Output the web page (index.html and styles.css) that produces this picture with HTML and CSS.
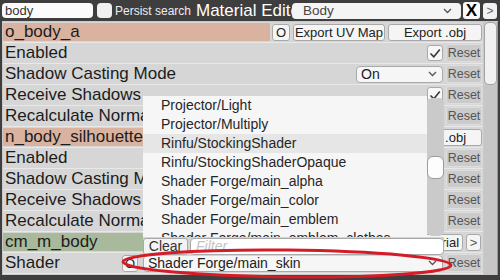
FILE: index.html
```html
<!DOCTYPE html>
<html>
<head>
<meta charset="utf-8">
<link rel="stylesheet" href="styles.css">
</head>
<body>
<div class="window">
  <div class="topbar">
    <div class="search">body</div>
    <div class="tcheck"></div>
    <span class="persist">Persist search</span>
    <span class="title">Material Editor</span>
    <div class="top-select"><span>Body</span><svg class="chev" width="9" height="6" viewBox="0 0 9 6"><path d="M1 1 L4.5 4.5 L8 1" fill="none" stroke="#555" stroke-width="1.3"/></svg></div>
    <div class="xbtn">X</div>
    <div class="navbtn">&gt;</div>
  </div>
  <div class="main">
    <div class="rows">
      <div class="row">
        <div class="label hdr-salmon">o_body_a</div>
        <div class="btn w-o">O</div>
        <div class="btn w-uv">Export UV Map</div>
        <div class="btn w-obj">Export .obj</div>
      </div>
      <div class="row">
        <div class="label">Enabled</div>
        <div class="cb"><svg width="14" height="14" viewBox="0 0 14 14"><path d="M2.5 7.5 L5.8 10.8 L11.8 3.5" fill="none" stroke="#333" stroke-width="1.5"/></svg></div>
        <div class="reset">Reset</div>
      </div>
      <div class="row">
        <div class="label">Shadow Casting Mode</div>
        <div class="dd w-on"><span>On</span><svg class="chev" width="9" height="6" viewBox="0 0 9 6"><path d="M1 1 L4.5 4.5 L8 1" fill="none" stroke="#555" stroke-width="1.3"/></svg></div>
        <div class="reset">Reset</div>
      </div>
      <div class="row">
        <div class="label">Receive Shadows</div>
        <div class="cb"><svg width="14" height="14" viewBox="0 0 14 14"><path d="M2.5 7.5 L5.8 10.8 L11.8 3.5" fill="none" stroke="#333" stroke-width="1.5"/></svg></div>
        <div class="reset">Reset</div>
      </div>
      <div class="row">
        <div class="label">Recalculate Normals</div>
        <div class="cb"></div>
        <div class="reset">Reset</div>
      </div>
      <div class="row">
        <div class="label hdr-salmon">n_body_silhouette</div>
        <div class="btn w-o">O</div>
        <div class="btn w-uv">Export UV Map</div>
        <div class="btn w-obj">Export .obj</div>
      </div>
      <div class="row">
        <div class="label">Enabled</div>
        <div class="cb"></div>
        <div class="reset">Reset</div>
      </div>
      <div class="row">
        <div class="label">Shadow Casting Mode</div>
        <div class="dd w-on"><span>On</span></div>
        <div class="reset">Reset</div>
      </div>
      <div class="row">
        <div class="label">Receive Shadows</div>
        <div class="cb"></div>
        <div class="reset">Reset</div>
      </div>
      <div class="row">
        <div class="label">Recalculate Normals</div>
        <div class="cb"></div>
        <div class="reset">Reset</div>
      </div>
      <div class="row">
        <div class="label hdr-green">cm_m_body</div>
        <div class="btn w-mat">Material</div>
        <div class="btn w-next">&gt;</div>
      </div>
      <div class="row">
        <div class="label">Shader</div>
        <div class="btn w-so">O</div>
        <div class="dd w-shader"><span>Shader Forge/main_skin</span><svg class="chev" width="9" height="6" viewBox="0 0 9 6"><path d="M1 1 L4.5 4.5 L8 1" fill="none" stroke="#555" stroke-width="1.3"/></svg></div>
        <div class="reset">Reset</div>
      </div>
    </div>
    <div class="vscroll"><div class="vthumb"></div></div>
  </div>

  <div class="popup">
    <div class="plist">
      <div class="items">
        <div class="item">Projector/Light</div>
        <div class="item">Projector/Multiply</div>
        <div class="item hl">Rinfu/StockingShader</div>
        <div class="item">Rinfu/StockingShaderOpaque</div>
        <div class="item">Shader Forge/main_alpha</div>
        <div class="item">Shader Forge/main_color</div>
        <div class="item">Shader Forge/main_emblem</div>
        <div class="item">Shader Forge/main_emblem_clothes</div>
      </div>
      <div class="pscroll"><div class="ptrack"><div class="pthumb"></div></div></div>
    </div>
    <div class="pbottom">
      <div class="clear">Clear</div>
      <div class="filter">Filter</div>
    </div>
  </div>

  <svg class="annot" width="500" height="280" viewBox="0 0 500 280">
    <ellipse cx="287" cy="263.5" rx="164" ry="13.5" fill="none" stroke="#d41c28" stroke-width="3" transform="rotate(0.6 287 263.5)"/>
  </svg>
</div>
</body>
</html>
```

FILE: styles.css
```css
* { box-sizing: border-box; }
html, body { margin: 0; padding: 0; }
body {
  width: 500px;
  height: 280px;
  overflow: hidden;
  background: #3e3e3e;
  font-family: "Liberation Sans", Arial, sans-serif;
}
.window {
  position: relative;
  width: 500px;
  height: 280px;
  display: flex;
  flex-direction: column;
}
.topbar {
  height: 21px;
  display: flex;
  align-items: center;
  padding: 0 3px 0 2px;
  flex-shrink: 0;
}
.search {
  width: 91px;
  height: 15px;
  background: #fbfbfb;
  border-radius: 4px;
  font-size: 13px;
  line-height: 15px;
  padding-left: 3px;
  color: #333;
}
.tcheck {
  width: 15px;
  height: 15px;
  margin-left: 4px;
  background: #f0f0f0;
  border-radius: 4px;
}
.persist {
  margin-left: 3px;
  width: 78px;
  font-size: 12px;
  color: #ededed;
  white-space: nowrap;
}
.title {
  margin-left: 3px;
  width: 96px;
  overflow: hidden;
  white-space: nowrap;
  font-size: 17px;
  color: #fff;
}
.top-select {
  width: 169px;
  height: 16px;
  background: #f4f4f4;
  border-radius: 4px;
  display: flex;
  align-items: center;
  justify-content: space-between;
  padding: 0 9px 0 11px;
  font-size: 13.5px;
  color: #444;
}
.xbtn {
  margin-left: 2px;
  width: 17px;
  height: 17px;
  background: #fafafa;
  border-radius: 3px;
  font-size: 17px;
  font-weight: bold;
  line-height: 17px;
  text-align: center;
  color: #000;
}
.navbtn {
  margin-left: 3px;
  width: 14px;
  height: 16px;
  background: #f2f2f2;
  border-radius: 3px;
  font-size: 12px;
  line-height: 16px;
  text-align: center;
  color: #666;
}
.main {
  flex: 1;
  display: flex;
  margin: 0 2px 5px 2px;
  padding: 1px 0 0 1px;
  background: #c9c9c9;
}
.rows {
  width: 480px;
  display: flex;
  flex-direction: column;
}
.row {
  height: 21px;
  display: flex;
  align-items: center;
  padding: 0 1px 0 0;
  background: #d6d6d6;
  border-bottom: 1px solid #e8e8e8;
}
.label {
  flex: 1;
  min-width: 0;
  height: 18px;
  font-size: 17px;
  line-height: 18px;
  padding-left: 2px;
  color: #1c1c1c;
  white-space: nowrap;
  overflow: hidden;
}
.hdr-salmon { background: #d9b3a0; margin-right: 2px; }
.hdr-green { background: #a9b99c; margin-right: 2px; }
.btn {
  height: 17px;
  background: #f5f5f5;
  border: 1px solid #a9a9a9;
  border-radius: 3px;
  font-size: 13px;
  line-height: 15px;
  text-align: center;
  color: #222;
  white-space: nowrap;
  overflow: hidden;
}
.w-o { width: 18px; }
.w-uv { width: 92px; margin-left: 3px; }
.w-obj { width: 94px; margin-left: 3px; }
.w-mat { width: 54px; }
.w-next { width: 15px; margin-left: 3px; margin-right: 1px; color: #555; }
.w-so { width: 16px; margin-right: 5px; }
.cb {
  width: 16px;
  height: 16px;
  background: #f7f7f7;
  border: 1px solid #a9a9a9;
  border-radius: 3px;
  display: flex;
  align-items: center;
  justify-content: center;
}
.reset {
  width: 36px;
  height: 18px;
  margin-left: 3px;
  background: #cbcbcb;
  border: 1px solid #dedede;
  border-radius: 3px;
  font-size: 12.5px;
  line-height: 16px;
  text-align: center;
  color: #555;
}
.dd {
  height: 17px;
  background: #f6f6f6;
  border: 1px solid #a9a9a9;
  border-radius: 4px;
  display: flex;
  align-items: center;
  justify-content: space-between;
  padding: 0 5px 0 4px;
  font-size: 14px;
  color: #222;
  white-space: nowrap;
}
.w-on { width: 87px; }
.w-shader { width: 300px; }
.vscroll {
  width: 14px;
  margin-left: 1px;
  background: #c6c6c6;
  border-right: 1px solid #9a9a9a;
}
.vthumb {
  height: 63px;
  background: #f1f1f1;
  border: 1px solid #a5a5a5;
  border-radius: 5px;
}
.popup {
  position: absolute;
  left: 143px;
  top: 96px;
  width: 301px;
  height: 160px;
  display: flex;
  flex-direction: column;
}
.plist {
  height: 141px;
  display: flex;
}
.items {
  flex: 1;
  background: #f6f6f6;
  overflow: hidden;
}
.item {
  height: 19px;
  line-height: 19px;
  padding-left: 18px;
  font-size: 14px;
  color: #262626;
  white-space: nowrap;
}
.item.hl { background: #e6e6e6; }
.pscroll {
  width: 17px;
  padding-top: 2px;
  background: transparent;
}
.ptrack {
  height: 138px;
  background: #cacaca;
  border-radius: 5px;
  padding-top: 58px;
}
.pthumb {
  height: 23px;
  background: #fdfdfd;
  border: 1px solid #9c9c9c;
  border-radius: 6px;
}
.pbottom {
  flex: 1;
  display: flex;
  align-items: center;
  gap: 2px;
  background: #d4d4d4;
}
.clear {
  width: 45px;
  height: 17px;
  background: #f3f3f3;
  border: 1px solid #a9a9a9;
  border-radius: 3px;
  font-size: 14px;
  line-height: 15px;
  text-align: center;
  color: #333;
}
.filter {
  flex: 1;
  height: 17px;
  background: #fff;
  border: 1px solid #a9a9a9;
  border-radius: 4px;
  font-size: 14px;
  line-height: 15px;
  font-style: italic;
  padding-left: 5px;
  color: #c4c4c4;
}
.annot {
  position: absolute;
  left: 0;
  top: 0;
  pointer-events: none;
}
```
